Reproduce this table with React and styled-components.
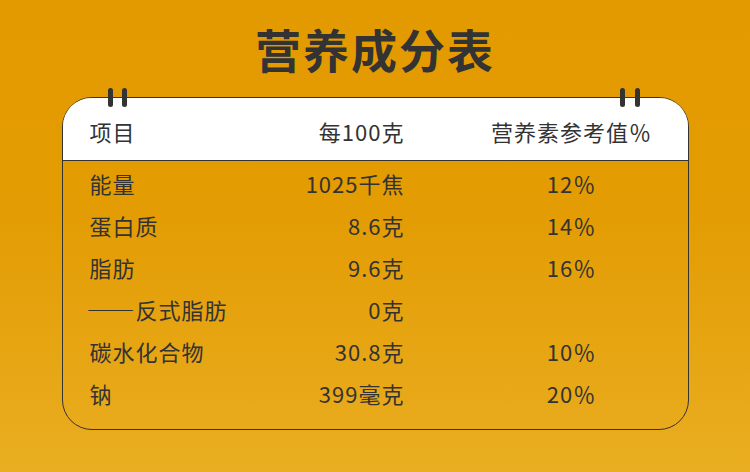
import React from "react";
import styled, { createGlobalStyle } from "styled-components";

const Global = createGlobalStyle`
  html, body { margin: 0; padding: 0; }
  body { font-family: "Noto Sans CJK SC", "Noto Sans", sans-serif; }
`;

const Page = styled.div`
  width: 750px;
  height: 472px;
  overflow: hidden;
  background: linear-gradient(180deg, #e39a00 0%, #e39c03 45%, #e7a716 80%, #eaae22 100%);
  display: flex;
  flex-direction: column;
  align-items: center;
  color: #333;
`;

const Title = styled.h1`
  margin: 0;
  padding-top: 17px;
  height: 97px;
  box-sizing: border-box;
  font-size: 46px;
  line-height: 62px;
  font-weight: 700;
  letter-spacing: 2px;
  color: #333;
`;

const Card = styled.div`
  position: relative;
  width: 627px;
  box-sizing: border-box;
  border: 1.5px solid #333;
  border-radius: 30px;
`;

const Ring = styled.span`
  position: absolute;
  top: -10.5px;
  width: 5px;
  height: 19px;
  border-radius: 2.5px;
  background: #333;
  left: ${(p) => p.$x}px;
`;

const Row = styled.div`
  display: grid;
  grid-template-columns: 160px 154px 1fr;
  padding-left: 27px;
  height: 42px;
  align-items: center;
  font-size: 22px;
  line-height: 1;
  letter-spacing: 1px;
  ${(p) =>
    p.$head &&
    `
    background: #fff;
    border-radius: 28px 28px 0 0;
    border-bottom: 1.5px solid #333;
    padding-top: 4px;
    box-sizing: border-box;
    height: 62.5px;
  `}
`;

const Body = styled.div`
  padding: 1px 0 15px;
`;

const Name = styled.span`
  text-align: left;
  white-space: nowrap;
`;

const Dash = styled.span`
  font-feature-settings: "fwid" 1;
  font-size: 24px;
  letter-spacing: 0;
  margin-left: -3px;
  margin-right: 1px;
`;

const Amount = styled.span`
  text-align: right;
  white-space: nowrap;
  margin-right: -1px;
`;

const Pct = styled.span`
  text-align: center;
  padding-left: 52px;
  white-space: nowrap;
`;

const rows = [
  ["能量", "1025千焦", "12％"],
  ["蛋白质", "8.6克", "14％"],
  ["脂肪", "9.6克", "16％"],
  ["反式脂肪", "0克", "", true],
  ["碳水化合物", "30.8克", "10％"],
  ["钠", "399毫克", "20％"],
];

export default function App() {
  return (
    <>
      <Global />
      <Page>
        <Title>营养成分表</Title>
        <Card>
          <Ring $x={45.5} />
          <Ring $x={59} />
          <Ring $x={557.5} />
          <Ring $x={572} />
          <Row $head>
            <Name>项目</Name>
            <Amount>每100克</Amount>
            <Pct>营养素参考值％</Pct>
          </Row>
          <Body>
            {rows.map((r) => (
              <Row key={r[0]}>
                <Name>
                  {r[3] && <Dash>——</Dash>}
                  {r[0]}
                </Name>
                <Amount>{r[1]}</Amount>
                <Pct>{r[2]}</Pct>
              </Row>
            ))}
          </Body>
        </Card>
      </Page>
    </>
  );
}
